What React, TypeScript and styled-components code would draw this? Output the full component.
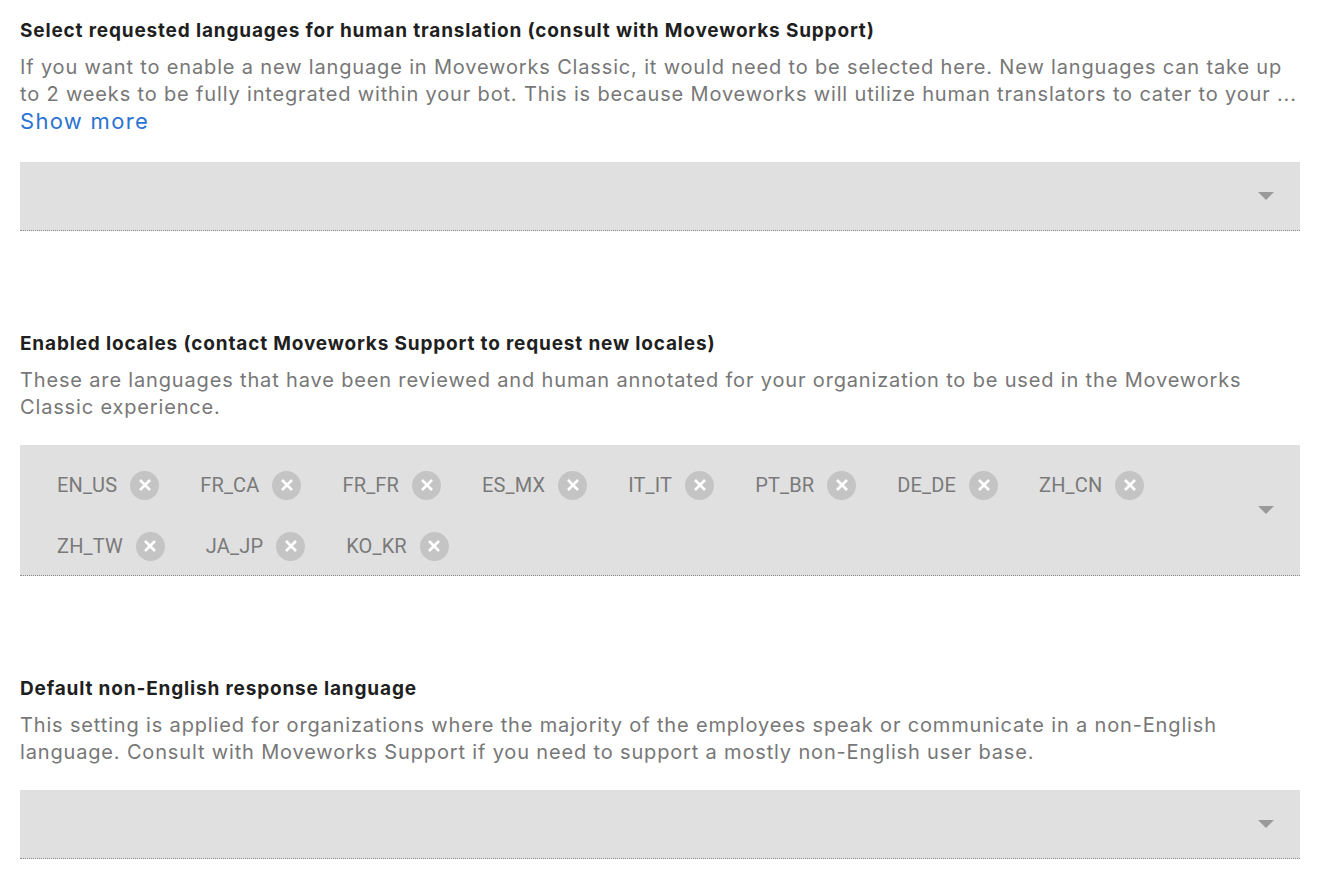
import React from "react";
import styled, { createGlobalStyle } from "styled-components";

const GlobalStyle = createGlobalStyle`
  html, body { margin: 0; padding: 0; background: #ffffff; }
  body { font-family: Inter, "Liberation Sans", Arial, sans-serif; }
`;

const Page = styled.div`
  width: 1280px;
  padding: 19px 34px 40px 20px;
  display: flex;
  flex-direction: column;
  gap: 101px;
`;

const Section = styled.section`
  display: flex;
  flex-direction: column;
`;

const Title = styled.h2`
  margin: 0 0 11px;
  font-family: Inter, "Liberation Sans", Arial, sans-serif;
  font-size: 19px;
  line-height: 24px;
  font-weight: 700;
  letter-spacing: 0.83px;
  color: #1f1f1f;
`;

const Description = styled.div`
  font-family: Inter, "Liberation Sans", Arial, sans-serif;
  font-size: 20px;
  line-height: 27px;
  letter-spacing: 0.84px;
  color: #777777;
  white-space: pre-line;
`;

const ShowMore = styled.a`
  display: block;
  font-family: Inter, "Liberation Sans", Arial, sans-serif;
  font-size: 22px;
  line-height: 27px;
  letter-spacing: 1.3px;
  color: #2b74d1;
  text-decoration: none;
  cursor: pointer;
`;

const Field = styled.div<{ $multi?: boolean; $gap: number }>`
  margin-top: ${(p) => p.$gap}px;
  position: relative;
  background: #e0e0e0;
  border-bottom: 1px dotted #8a8a8a;
  min-height: ${(p) => (p.$multi ? "131px" : "69px")};
  box-sizing: border-box;
  padding: ${(p) => (p.$multi ? "20px 60px 9px 37px" : "0")};
  display: flex;
  align-items: center;
`;

const ChipList = styled.div`
  display: flex;
  flex-wrap: wrap;
  column-gap: 41px;
  row-gap: 21px;
  align-self: flex-start;
`;

const Chip = styled.div`
  height: 40px;
  display: flex;
  align-items: center;
  gap: 13px;
  font-family: Roboto, "Liberation Sans", sans-serif;
  font-size: 20px;
  letter-spacing: 0.15px;
  color: #7a7a7a;
`;

const ChipDelete = styled.span`
  width: 29px;
  height: 29px;
  border-radius: 50%;
  background: #c4c4c4;
  display: flex;
  align-items: center;
  justify-content: center;
`;

const Arrow = styled.span`
  position: absolute;
  right: 26px;
  top: 50%;
  margin-top: -4px;
  width: 0;
  height: 0;
  border-left: 8px solid transparent;
  border-right: 8px solid transparent;
  border-top: 8px solid #9a9a9a;
`;

const locales = [
  "EN_US", "FR_CA", "FR_FR", "ES_MX", "IT_IT", "PT_BR", "DE_DE", "ZH_CN",
  "ZH_TW", "JA_JP", "KO_KR",
];

const CloseIcon = () => (
  <svg width="14" height="14" viewBox="0 0 14 14">
    <path d="M2 2 L12 12 M12 2 L2 12" stroke="#ffffff" strokeWidth="2.6" strokeLinecap="butt" />
  </svg>
);

export default function App() {
  return (
    <>
      <GlobalStyle />
      <Page>
        <Section>
          <Title>Select requested languages for human translation (consult with Moveworks Support)</Title>
          <Description>
            {"If you want to enable a new language in Moveworks Classic, it would need to be selected here. New languages can take up\nto 2 weeks to be fully integrated within your bot. This is because Moveworks will utilize human translators to cater to your ..."}
          </Description>
          <ShowMore>Show more</ShowMore>
          <Field $gap={27}>
            <Arrow />
          </Field>
        </Section>

        <Section>
          <Title>Enabled locales (contact Moveworks Support to request new locales)</Title>
          <Description>
            {"These are languages that have been reviewed and human annotated for your organization to be used in the Moveworks\nClassic experience."}
          </Description>
          <Field $multi $gap={24}>
            <ChipList>
              {locales.map((l) => (
                <Chip key={l}>
                  {l}
                  <ChipDelete>
                    <CloseIcon />
                  </ChipDelete>
                </Chip>
              ))}
            </ChipList>
            <Arrow />
          </Field>
        </Section>

        <Section>
          <Title>Default non-English response language</Title>
          <Description>
            {"This setting is applied for organizations where the majority of the employees speak or communicate in a non-English\nlanguage. Consult with Moveworks Support if you need to support a mostly non-English user base."}
          </Description>
          <Field $gap={24}>
            <Arrow />
          </Field>
        </Section>
      </Page>
    </>
  );
}
